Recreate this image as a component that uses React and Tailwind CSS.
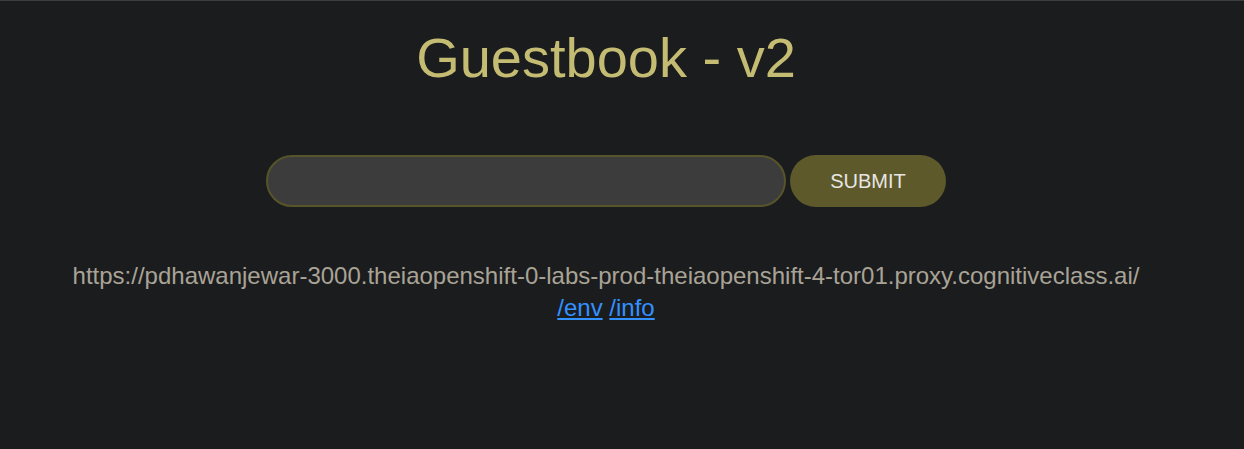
export default function App() {
  return (
    <div className="min-h-screen bg-[#1b1c1e] border-t border-[#3d3d3d] font-['Liberation_Sans',Arial,sans-serif]">
      <div className="w-[1212px] flex flex-col items-center">
        <h1 className="mt-[25px] text-[56px] leading-[64px] text-[#c5bc73] font-normal">Guestbook - v2</h1>
        <form className="mt-[65px] flex items-center gap-[4px]" onSubmit={(e) => e.preventDefault()}>
          <input
            type="text"
            className="w-[520px] h-[52px] rounded-full border-2 border-[#57542a] bg-[#3c3c3c] px-5 text-[20px] text-[#e8e6e3] outline-none"
          />
          <button
            type="submit"
            className="w-[156px] h-[52px] rounded-full bg-[#5d592b] text-[20px] text-[#e8e6e3]"
          >
            SUBMIT
          </button>
        </form>
        <div className="mt-[53px] text-[24px] leading-[32px] text-[#a9a396] text-center">
          <div>https://pdhawanjewar-3000.theiaopenshift-0-labs-prod-theiaopenshift-4-tor01.proxy.cognitiveclass.ai/</div>
          <div>
            <a href="#" className="text-[#3391ff] underline">/env</a>{" "}
            <a href="#" className="text-[#3391ff] underline">/info</a>
          </div>
        </div>
      </div>
    </div>
  );
}
